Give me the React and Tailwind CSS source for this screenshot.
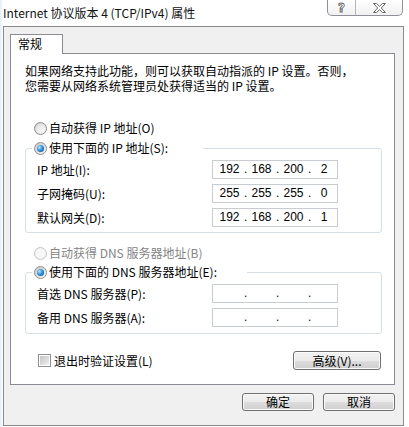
import React from "react";

function Radio({ checked, disabled }) {
  return (
    <span
      className={
        disabled
          ? "w-[13px] h-[13px] rounded-full border border-[#c6c6c6] bg-[#f3f3f3] flex items-center justify-center shrink-0"
          : "w-[13px] h-[13px] rounded-full border border-[#8e8f8f] bg-[linear-gradient(135deg,#c9c9c9,#f6f6f6)] flex items-center justify-center shrink-0"
      }
    >
      {checked ? (
        <span className="w-[7px] h-[7px] rounded-full bg-[radial-gradient(circle_at_35%_35%,#b9e6ff_0%,#2f93e0_45%,#0b3f7d_100%)]" />
      ) : (
        <span
          className={
            disabled
              ? "w-[9px] h-[9px] rounded-full bg-[#f7f7f7]"
              : "w-[9px] h-[9px] rounded-full bg-[linear-gradient(135deg,#dcdcdc,#ffffff)]"
          }
        />
      )}
    </span>
  );
}

function IPBox({ v }) {
  const parts = v || ["", "", "", ""];
  return (
    <div className="w-[126px] h-[19px] border border-[#c8cdd4] bg-white flex items-center pl-[2px] font-['Liberation_Sans',sans-serif] text-[12px] leading-[17px] text-black">
      <span className="w-[29px] text-center">{parts[0]}</span>
      <span className="w-[3px] text-center">.</span>
      <span className="w-[29px] text-center">{parts[1]}</span>
      <span className="w-[3px] text-center">.</span>
      <span className="w-[29px] text-center">{parts[2]}</span>
      <span className="w-[3px] text-center">.</span>
      <span className="flex-1 text-center">{parts[3]}</span>
    </div>
  );
}

function Row({ label, v }) {
  return (
    <div className="h-[19px] flex items-center pl-[11px]">
      <span className="w-[175px] leading-[16px]">{label}</span>
      <IPBox v={v} />
    </div>
  );
}

function WinButton({ children, w }) {
  return (
    <div
      className={
        (w || "w-[72px]") +
        " h-[18px] border border-[#707070] rounded-[3px] bg-[linear-gradient(#f2f2f2_0%,#ebebeb_50%,#dddddd_51%,#cfcfcf_100%)] shadow-[inset_0_0_0_1px_#fbfbfb] flex items-center justify-center leading-[16px]"
      }
    >
      {children}
    </div>
  );
}

export default function App() {
  return (
    <div className="w-[409px] h-[427px] overflow-hidden bg-[linear-gradient(90deg,#e3edf6_0px,#ffffff_3px)] text-black text-[12px] font-['Noto_Sans_CJK_SC',sans-serif]">
      {/* Title bar */}
      <div className="flex h-[26px]">
        <span className="ml-[3px] mt-[5px] leading-[16px] text-[12px] text-[#111]">
          Internet 协议版本 4 (TCP/IPv4) 属性
        </span>
        <div className="ml-auto mr-[6px] flex h-[16px] border border-t-0 border-[#8d9096] rounded-b-[5px] overflow-hidden bg-[linear-gradient(#ffffff,#f1f1f1)]">
          <div className="w-[28px] border-r border-[#b3b5b9] flex items-center justify-center">
            <span className="font-['DejaVu_Sans',sans-serif] font-bold text-[12px] leading-[14px] text-white [-webkit-text-stroke:0.8px_#5c5c5c]">
              ?
            </span>
          </div>
          <div className="w-[46px] flex items-center justify-center">
            <svg width="13" height="10" viewBox="0 0 13 10">
              <polygon
                points="0.5,0.5 3.5,0.5 6.5,3.3 9.5,0.5 12.5,0.5 8.3,5 12.5,9.5 9.5,9.5 6.5,6.7 3.5,9.5 0.5,9.5 4.7,5"
                fill="#ffffff"
                stroke="#646464"
                strokeWidth="1"
              />
            </svg>
          </div>
        </div>
      </div>

      {/* Client area */}
      <div className="ml-[3px] w-[401px] h-[400px] border border-[#8a8a8a] bg-[#f0f0f0] flex flex-col">
        {/* Tab */}
        <div className="ml-[6px] mt-[7px] w-[53px] h-[20px] border border-b-0 border-[#898c95] bg-white -mb-px relative z-10 pl-[7px] pt-[1px] leading-[16px]">
          常规
        </div>
        {/* Panel */}
        <div className="ml-[6px] w-[385px] h-[332px] border border-[#898c95] bg-white flex flex-col">
          <div className="mt-[9px] ml-[14px] flex flex-col">
            <span className="h-[15px] leading-[15px]">如果网络支持此功能，则可以获取自动指派的 IP 设置。否则，</span>
            <span className="h-[15px] leading-[15px]">您需要从网络系统管理员处获得适当的 IP 设置。</span>
          </div>

          <div className="mt-[27px] ml-[23px] h-[16px] flex items-center gap-[2px]">
            <Radio />
            <span className="leading-[16px]">自动获得 IP 地址(O)</span>
          </div>

          <div className="mt-[12px] ml-[14px] mr-[12px] border border-[#d5dfe5] rounded-[3px] pb-[5px]">
            <div className="-mt-[9px] ml-[6px] w-[171px] bg-white pl-[2px] h-[16px] flex items-center gap-[2px]">
              <Radio checked />
              <span className="leading-[16px]">使用下面的 IP 地址(S):</span>
            </div>
            <div className="mt-[4px] flex flex-col gap-[5px]">
              <Row label="IP 地址(I):" v={["192", "168", "200", "2"]} />
              <Row label="子网掩码(U):" v={["255", "255", "255", "0"]} />
              <Row label="默认网关(D):" v={["192", "168", "200", "1"]} />
            </div>
          </div>

          <div className="mt-[12px] ml-[23px] h-[16px] flex items-center gap-[2px]">
            <Radio disabled />
            <span className="leading-[16px] text-[#848484]">自动获得 DNS 服务器地址(B)</span>
          </div>

          <div className="mt-[11px] ml-[14px] mr-[12px] border border-[#d5dfe5] rounded-[3px] pb-[6px]">
            <div className="-mt-[9px] ml-[6px] w-[215px] bg-white pl-[2px] h-[16px] flex items-center gap-[2px]">
              <Radio checked />
              <span className="leading-[16px]">使用下面的 DNS 服务器地址(E):</span>
            </div>
            <div className="mt-[4px] flex flex-col gap-[5px]">
              <Row label="首选 DNS 服务器(P):" />
              <Row label="备用 DNS 服务器(A):" />
            </div>
          </div>

          <div className="mt-[17px] h-[19px] flex items-center">
            <span className="ml-[27px] w-[13px] h-[13px] border border-[#8e8f8f] bg-white flex items-center justify-center shrink-0">
              <span className="w-[9px] h-[9px] bg-[linear-gradient(135deg,#c4c4c4,#efefef)]" />
            </span>
            <span className="ml-[3px] leading-[16px]">退出时验证设置(L)</span>
            <div className="ml-auto mr-[13px]">
              <WinButton w="w-[88px] !h-[19px]">高级(V)...</WinButton>
            </div>
          </div>
        </div>

        {/* Bottom buttons */}
        <div className="mt-[8px] mr-[8px] flex justify-end gap-[9px]">
          <WinButton>确定</WinButton>
          <WinButton>取消</WinButton>
        </div>
      </div>
    </div>
  );
}
